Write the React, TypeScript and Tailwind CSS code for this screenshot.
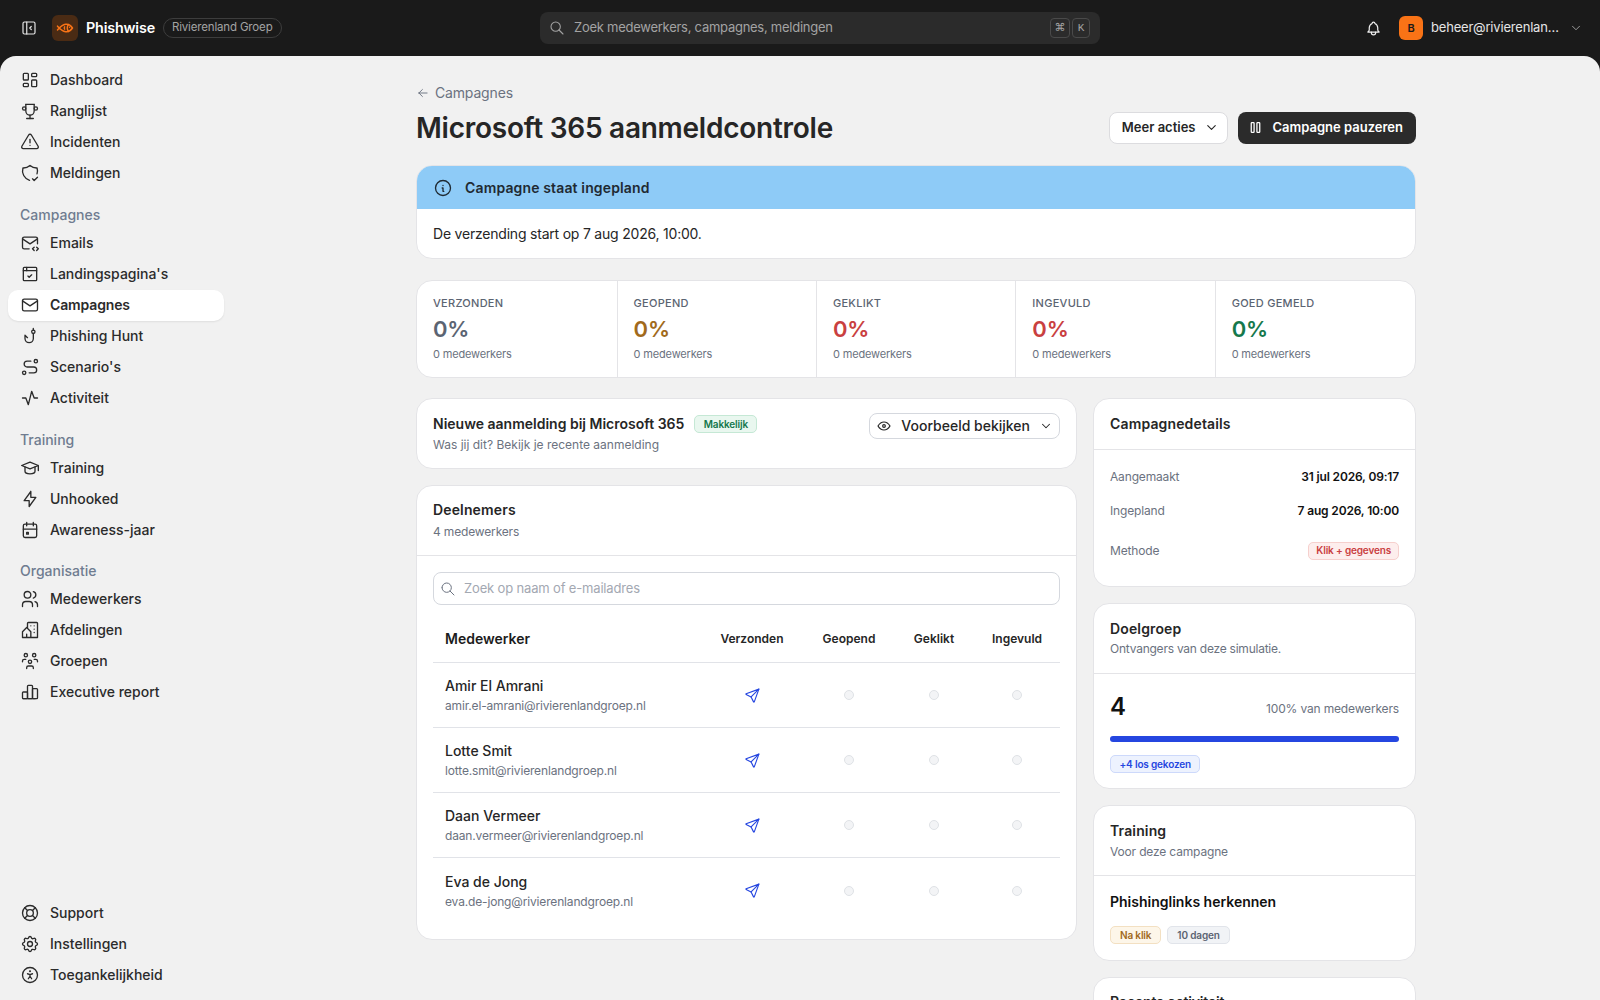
import type { ComponentType, ReactNode } from 'react'
import {
  TbAccessible,
  TbActivity,
  TbAlertTriangle,
  TbArrowLeft,
  TbBell,
  TbBolt,
  TbBrowserCheck,
  TbBuildingCommunity,
  TbCalendarEvent,
  TbChartBar,
  TbChevronDown,
  TbEye,
  TbFish,
  TbFishHook,
  TbInfoCircle,
  TbLayoutDashboard,
  TbLayoutSidebarLeftCollapse,
  TbLifebuoy,
  TbMail,
  TbMailCode,
  TbPlayerPause,
  TbRoute,
  TbSchool,
  TbSearch,
  TbSend,
  TbSettings,
  TbShieldCheck,
  TbTrophy,
  TbUsers,
  TbUsersGroup,
} from 'react-icons/tb'

type IconType = ComponentType<{ size?: number; strokeWidth?: number; className?: string }>

const navTop: { label: string; icon: IconType }[] = [
  { label: 'Dashboard', icon: TbLayoutDashboard },
  { label: 'Ranglijst', icon: TbTrophy },
  { label: 'Incidenten', icon: TbAlertTriangle },
  { label: 'Meldingen', icon: TbShieldCheck },
]

const navGroups: { title: string; items: { label: string; icon: IconType; active?: boolean }[] }[] = [
  {
    title: 'Campagnes',
    items: [
      { label: 'Emails', icon: TbMailCode },
      { label: "Landingspagina's", icon: TbBrowserCheck },
      { label: 'Campagnes', icon: TbMail, active: true },
      { label: 'Phishing Hunt', icon: TbFishHook },
      { label: "Scenario's", icon: TbRoute },
      { label: 'Activiteit', icon: TbActivity },
    ],
  },
  {
    title: 'Training',
    items: [
      { label: 'Training', icon: TbSchool },
      { label: 'Unhooked', icon: TbBolt },
      { label: 'Awareness-jaar', icon: TbCalendarEvent },
    ],
  },
  {
    title: 'Organisatie',
    items: [
      { label: 'Medewerkers', icon: TbUsers },
      { label: 'Afdelingen', icon: TbBuildingCommunity },
      { label: 'Groepen', icon: TbUsersGroup },
      { label: 'Executive report', icon: TbChartBar },
    ],
  },
]

const navBottom: { label: string; icon: IconType }[] = [
  { label: 'Support', icon: TbLifebuoy },
  { label: 'Instellingen', icon: TbSettings },
  { label: 'Toegankelijkheid', icon: TbAccessible },
]

const stats = [
  { label: 'VERZONDEN', color: 'text-[#5b6472]' },
  { label: 'GEOPEND', color: 'text-[#a16a1c]' },
  { label: 'GEKLIKT', color: 'text-[#c94040]' },
  { label: 'INGEVULD', color: 'text-[#c94040]' },
  { label: 'GOED GEMELD', color: 'text-[#15784c]' },
]

const people = [
  { name: 'Amir El Amrani', email: 'amir.el-amrani@rivierenlandgroep.nl' },
  { name: 'Lotte Smit', email: 'lotte.smit@rivierenlandgroep.nl' },
  { name: 'Daan Vermeer', email: 'daan.vermeer@rivierenlandgroep.nl' },
  { name: 'Eva de Jong', email: 'eva.de-jong@rivierenlandgroep.nl' },
]

const NavItem = ({ label, icon: Icon, active }: { label: string; icon: IconType; active?: boolean }) => (
  <div
    className={`flex h-[31px] items-center gap-2.5 rounded-[10px] px-3 text-sm font-medium text-[#2b2b2b] ${
      active ? 'bg-white font-semibold tracking-[-0.01em] shadow-[0_1px_2px_rgba(0,0,0,0.08)]' : 'tracking-normal'
    }`}
  >
    <Icon size={20} strokeWidth={1.6} className="shrink-0" />
    <span>{label}</span>
  </div>
)

const Card = ({ children, className = '' }: { children: ReactNode; className?: string }) => (
  <div className={`rounded-2xl border border-[#e4e4e7] bg-white ${className}`}>{children}</div>
)

const Badge = ({ children, className }: { children: ReactNode; className: string }) => (
  <span className={`inline-flex h-[18px] items-center rounded-[5px] border text-[10px] font-semibold ${className}`}>
    {children}
  </span>
)

const Dot = () => (
  <div className="flex justify-center">
    <span className="h-2.5 w-2.5 rounded-full border border-[#dfe2e6] bg-[#f3f4f6]" />
  </div>
)

export default function App() {
  return (
    <div className="flex h-screen flex-col overflow-hidden bg-[#1a1a1a] font-['Inter',sans-serif] tracking-[-0.01em]">
      {/* Top bar */}
      <header className="relative flex h-14 shrink-0 items-center pl-5 pr-[17px]">
        <TbLayoutSidebarLeftCollapse size={18} strokeWidth={1.6} className="text-[#e5e5e5]" />
        <div className="ml-[14px] flex h-[26px] w-[26px] items-center justify-center rounded-md bg-[#4a2b14]">
          <TbFish size={18} strokeWidth={2} className="text-[#f97316]" />
        </div>
        <span className="ml-2 text-[14.3px] font-semibold text-white">Phishwise</span>
        <span className="ml-2 flex h-5 items-center rounded-full border border-[#3d3d3d] px-2 text-[11.5px] text-[#a3a3a3]">
          Rivierenland Groep
        </span>

        <div className="absolute left-[540px] top-3 flex h-8 w-[560px] items-center rounded-lg bg-[#2b2b2b] pl-[9px] pr-2.5 text-[#a3a3a3]">
          <TbSearch size={16} strokeWidth={1.6} />
          <span className="ml-[9px] text-[13px] tracking-[-0.02em]">Zoek medewerkers, campagnes, meldingen</span>
          <div className="ml-auto flex gap-0.5">
            <kbd className="flex h-5 w-5 items-center justify-center rounded border border-[#4a4a4a] font-['DejaVu_Sans',sans-serif] text-[11px]">⌘</kbd>
            <kbd className="flex h-5 w-[18px] items-center justify-center rounded border border-[#4a4a4a] text-[11px]">K</kbd>
          </div>
        </div>

        <div className="ml-auto flex items-center">
          <TbBell size={17} strokeWidth={1.7} className="text-[#f0f0f0]" />
          <span className="ml-[17px] flex h-6 w-6 items-center justify-center rounded-md bg-[#f97316] text-[11px] font-semibold text-[#1a1a1a]">
            B
          </span>
          <span className="ml-2 w-[130px] truncate text-[13px] tracking-[-0.015em] text-[#e5e5e5]">beheer@rivierenlandgroep.nl</span>
          <TbChevronDown size={14} strokeWidth={1.6} className="ml-2 text-[#a3a3a3]" />
        </div>
      </header>

      <div className="flex min-h-0 flex-1 overflow-hidden rounded-t-2xl bg-[#f1f1f1]">
        {/* Sidebar */}
        <aside className="flex w-[232px] shrink-0 flex-col px-2 pb-2.5 pt-2">
          <div className="mb-px">
            {navTop.map((item) => (
              <NavItem key={item.label} {...item} />
            ))}
          </div>
          {navGroups.map((group) => (
            <div key={group.title} className="mt-2.5">
              <div className="flex h-[28.5px] items-center px-3 pt-1 text-sm font-medium tracking-normal text-[#6f7c90]">{group.title}</div>
              {group.items.map((item) => (
                <NavItem key={item.label} {...item} />
              ))}
            </div>
          ))}
          <div className="mt-auto">
            {navBottom.map((item) => (
              <NavItem key={item.label} {...item} />
            ))}
          </div>
        </aside>

        {/* Main */}
        <main className="min-w-0 flex-1 overflow-hidden">
          <div className="mx-auto w-[1000px] pt-[27px]">
            <div className="flex items-center gap-[5px] text-sm text-[#6b7280]">
              <TbArrowLeft size={14} strokeWidth={1.6} />
              Campagnes
            </div>

            <div className="mt-1.5 flex items-center justify-between">
              <h1 className="pt-px text-[28px] font-semibold leading-9 tracking-[-0.009em] text-[#262626]">Microsoft 365 aanmeldcontrole</h1>
              <div className="flex items-center gap-2.5 tracking-normal">
                <button className="flex h-8 items-center gap-2 rounded-lg border border-[#dcdcdf] bg-white pl-3 pr-2 text-[13px] font-semibold text-[#262626]">
                  Meer acties
                  <TbChevronDown size={15} strokeWidth={1.8} />
                </button>
                <button className="flex h-8 items-center gap-[9px] rounded-lg bg-[#2b2b2b] pl-[9px] pr-[13px] text-[13px] font-semibold text-white">
                  <TbPlayerPause size={17} strokeWidth={1.8} />
                  Campagne pauzeren
                </button>
              </div>
            </div>

            {/* Alert */}
            <Card className="mt-[19px] overflow-hidden">
              <div className="flex h-[43px] items-center gap-3 bg-[#8ecbf7] px-4 text-sm font-semibold tracking-[0.01em] text-[#1f2a33]">
                <TbInfoCircle size={20} strokeWidth={1.6} />
                Campagne staat ingepland
              </div>
              <div className="flex h-[49px] items-center px-4 text-sm tracking-[-0.015em] text-[#262626]">De verzending start op 7 aug 2026, 10:00.</div>
            </Card>

            {/* Stats */}
            <Card className="mt-[21px] grid grid-cols-[200.6px_repeat(4,1fr)] divide-x divide-[#e4e4e7]">
              {stats.map((stat) => (
                <div key={stat.label} className="h-[96px] px-4 pt-[14px]">
                  <div className="text-[11px] font-medium leading-4 tracking-[0.025em] text-[#5b6472]">{stat.label}</div>
                  <div className={`mt-0.5 text-[22px] font-semibold leading-8 ${stat.color}`}>0%</div>
                  <div className="mt-px text-[11px] leading-4 text-[#6b7280]">0 medewerkers</div>
                </div>
              ))}
            </Card>

            <div className="mt-5 flex items-start gap-4">
              {/* Left column */}
              <div className="flex min-w-0 flex-1 flex-col gap-4">
                <Card className="flex h-[71px] items-start justify-between px-4 pt-[15px]">
                  <div>
                    <div className="flex items-center gap-2.5">
                      <span className="text-sm font-semibold tracking-normal text-[#262626]">Nieuwe aanmelding bij Microsoft 365</span>
                      <Badge className="border-[#c5e8d5] bg-[#e9f7ef] px-[8.5px] text-[#15784c]">Makkelijk</Badge>
                    </div>
                    <div className="mt-[3px] text-xs tracking-normal text-[#6b7280]">Was jij dit? Bekijk je recente aanmelding</div>
                  </div>
                  <button className="-mt-px flex h-[26px] items-center rounded-lg border border-[#d5d8de] bg-white px-1.5 text-sm font-medium tracking-normal text-[#262626]">
                    <TbEye size={16} strokeWidth={1.8} />
                    <span className="mx-[9px]">Voorbeeld bekijken</span>
                    <TbChevronDown size={14} strokeWidth={1.8} />
                  </button>
                </Card>

                <Card className="h-[455px]">
                  <div className="h-[70px] border-b border-[#e4e4e7] px-4 pt-[14px]">
                    <div className="text-sm font-semibold leading-5 tracking-[0.01em] text-[#262626]">Deelnemers</div>
                    <div className="mt-1 text-xs leading-4 text-[#6b7280]">4 medewerkers</div>
                  </div>
                  <div className="px-4 pt-4">
                    <div className="flex h-[33px] items-center gap-2 rounded-lg border border-[#d5d8de] px-1.5 text-[13px] text-[#a3a8b2]">
                      <TbSearch size={16} strokeWidth={1.5} className="text-[#6b7280]" />
                      Zoek op naam of e-mailadres
                    </div>
                    <div className="mt-[11px] grid h-[47px] grid-cols-[1fr_104px_90px_80px_86px] items-center border-b border-[#e1e3e8] text-center text-xs font-semibold tracking-normal text-[#262626]">
                      <div className="pl-3 text-left text-sm text-[#1c1c1c]">Medewerker</div>
                      <div>Verzonden</div>
                      <div>Geopend</div>
                      <div>Geklikt</div>
                      <div>Ingevuld</div>
                    </div>
                    {people.map((person) => (
                      <div
                        key={person.email}
                        className="grid h-[65px] grid-cols-[1fr_104px_90px_80px_86px] items-center border-b border-[#e1e3e8] last:border-b-0"
                      >
                        <div className="pl-3">
                          <div className="text-sm font-medium leading-5 tracking-normal text-[#262626]">{person.name}</div>
                          <div className="mt-0.5 text-xs leading-4 text-[#6b7280]">{person.email}</div>
                        </div>
                        <div className="flex justify-center">
                          <TbSend size={17} strokeWidth={1.6} className="text-[#2546e0]" />
                        </div>
                        <Dot />
                        <Dot />
                        <Dot />
                      </div>
                    ))}
                  </div>
                </Card>
              </div>

              {/* Right column */}
              <div className="flex w-[323px] shrink-0 flex-col gap-4">
                <Card className="h-[189px]">
                  <div className="flex h-[51px] items-center border-b border-[#e4e4e7] px-4 text-sm font-semibold tracking-[0.01em] text-[#262626]">
                    Campagnedetails
                  </div>
                  <div className="px-4 text-xs">
                    <div className="mt-[10px] flex h-[34px] items-center justify-between">
                      <span className="text-[#6b7280]">Aangemaakt</span>
                      <span className="font-semibold text-[#111]">31 jul 2026, 09:17</span>
                    </div>
                    <div className="flex h-[34px] items-center justify-between">
                      <span className="text-[#6b7280]">Ingepland</span>
                      <span className="font-semibold text-[#111]">7 aug 2026, 10:00</span>
                    </div>
                    <div className="mt-1.5 flex h-[34px] items-center justify-between">
                      <span className="text-[#6b7280]">Methode</span>
                      <Badge className="border-[#f6d0cd] bg-[#fdeeed] px-[7px] text-[#c94040]">Klik + gegevens</Badge>
                    </div>
                  </div>
                </Card>

                <Card className="h-[186px]">
                  <div className="h-[70px] border-b border-[#e4e4e7] px-4 pt-[15px]">
                    <div className="text-sm font-semibold leading-5 tracking-[0.01em] text-[#262626]">Doelgroep</div>
                    <div className="mt-0.5 text-xs leading-4 tracking-[-0.02em] text-[#6b7280]">Ontvangers van deze simulatie.</div>
                  </div>
                  <div className="px-4 pt-[17px]">
                    <div className="flex items-center justify-between">
                      <span className="text-2xl font-semibold leading-8 text-[#111]">4</span>
                      <span className="mt-1 text-xs text-[#6b7280]">100% van medewerkers</span>
                    </div>
                    <div className="mt-[13px] h-1.5 rounded-full bg-[#2546e0]" />
                    <Badge className="mt-[13px] border-[#cdd9fb] bg-[#edf2fe] px-[8.5px] text-[#2546e0]">+4 los gekozen</Badge>
                  </div>
                </Card>

                <Card className="h-[156px]">
                  <div className="h-[70px] border-b border-[#e4e4e7] px-4 pt-[15px]">
                    <div className="text-sm font-semibold leading-5 tracking-[0.01em] text-[#262626]">Training</div>
                    <div className="mt-[3px] text-xs leading-4 text-[#6b7280]">Voor deze campagne</div>
                  </div>
                  <div className="px-4 pt-4">
                    <div className="text-sm font-semibold leading-5 tracking-normal text-[#111]">Phishinglinks herkennen</div>
                    <div className="mt-3.5 flex gap-1.5">
                      <Badge className="border-[#f3e0c2] bg-[#fdf6e9] px-[9px] text-[#a16a1c]">Na klik</Badge>
                      <Badge className="border-[#e1e4ea] bg-[#f1f3f6] px-[9px] text-[#5b6472]">10 dagen</Badge>
                    </div>
                  </div>
                </Card>

                <Card className="h-[120px] px-4 pt-[14px]">
                  <div className="text-sm font-semibold leading-5 text-[#262626]">Recente activiteit</div>
                </Card>
              </div>
            </div>
          </div>
        </main>
      </div>
    </div>
  )
}
